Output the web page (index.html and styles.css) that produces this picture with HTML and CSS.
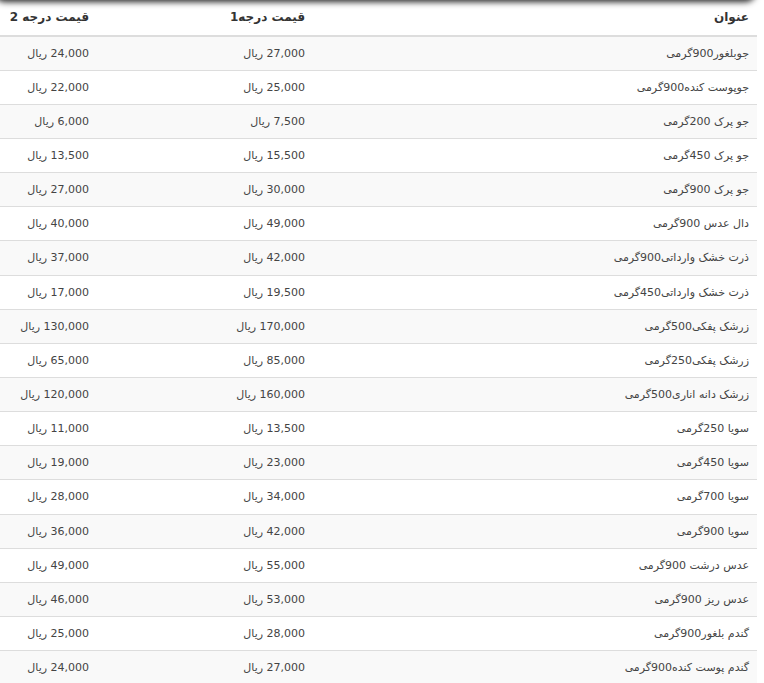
FILE: index.html
```html
<!DOCTYPE html>
<html lang="fa" dir="rtl">
<head>
<meta charset="utf-8">
<link rel="stylesheet" href="styles.css">
</head>
<body>
<div class="topbar"></div>
<table class="prices">
<thead>
<tr><th class="c-title">عنوان</th><th class="c-p1">قیمت درجه1</th><th class="c-p2">قیمت درجه 2</th></tr>
</thead>
<tbody>
<tr><td>جوبلغور900گرمی</td><td>27,000 ریال</td><td>24,000 ریال</td></tr>
<tr><td>جوپوست کنده900گرمی</td><td>25,000 ریال</td><td>22,000 ریال</td></tr>
<tr><td>جو پرک 200گرمی</td><td>7,500 ریال</td><td>6,000 ریال</td></tr>
<tr><td>جو پرک 450گرمی</td><td>15,500 ریال</td><td>13,500 ریال</td></tr>
<tr><td>جو پرک 900گرمی</td><td>30,000 ریال</td><td>27,000 ریال</td></tr>
<tr><td>دال عدس 900گرمی</td><td>49,000 ریال</td><td>40,000 ریال</td></tr>
<tr><td>ذرت خشک وارداتی900گرمی</td><td>42,000 ریال</td><td>37,000 ریال</td></tr>
<tr><td>ذرت خشک وارداتی450گرمی</td><td>19,500 ریال</td><td>17,000 ریال</td></tr>
<tr><td>زرشک پفکی500گرمی</td><td>170,000 ریال</td><td>130,000 ریال</td></tr>
<tr><td>زرشک پفکی250گرمی</td><td>85,000 ریال</td><td>65,000 ریال</td></tr>
<tr><td>زرشک دانه اناری500گرمی</td><td>160,000 ریال</td><td>120,000 ریال</td></tr>
<tr><td>سویا 250گرمی</td><td>13,500 ریال</td><td>11,000 ریال</td></tr>
<tr><td>سویا 450گرمی</td><td>23,000 ریال</td><td>19,000 ریال</td></tr>
<tr><td>سویا 700گرمی</td><td>34,000 ریال</td><td>28,000 ریال</td></tr>
<tr><td>سویا 900گرمی</td><td>42,000 ریال</td><td>36,000 ریال</td></tr>
<tr><td>عدس درشت 900گرمی</td><td>55,000 ریال</td><td>49,000 ریال</td></tr>
<tr><td>عدس ریز 900گرمی</td><td>53,000 ریال</td><td>46,000 ریال</td></tr>
<tr><td>گندم بلغور900گرمی</td><td>28,000 ریال</td><td>25,000 ریال</td></tr>
<tr><td>گندم پوست کنده900گرمی</td><td>27,000 ریال</td><td>24,000 ریال</td></tr>
</tbody>
</table>
</body>
</html>
```
FILE: styles.css
```css
html, body {
  margin: 0;
  padding: 0;
  background: #fff;
}
body {
  font-family: Tahoma, "DejaVu Sans", sans-serif;
  font-size: 11px;
  color: #444;
  direction: rtl;
  position: relative;
  overflow: hidden;
}
.topbar {
  position: absolute;
  top: -20px;
  right: 9px;
  width: 760px;
  height: 20px;
  border-radius: 0 0 10px 10px;
  background: #555;
  box-shadow: 0 1px 6px 1px rgba(0, 0, 0, 0.85);
  z-index: 2;
}
.prices {
  width: 757px;
  margin-left: auto;
  margin-right: 7px;
  border-collapse: collapse;
  border-spacing: 0;
  table-layout: fixed;
}
.prices th,
.prices td {
  padding: 8px;
  line-height: 17.14px;
  text-align: right;
  white-space: nowrap;
}
.prices th {
  font-size: 12px;
  line-height: 18.6px;
  font-weight: bold;
  color: #333;
  border-bottom: 2px solid #ddd;
}
.prices td {
  border-top: 1px solid #ddd;
}
.prices tbody tr:first-child td {
  border-top: 0;
}
.prices tbody tr:nth-child(odd) td {
  background: #f9f9f9;
}
.c-title { width: 428px; }
.c-p1 { width: 200px; }
.c-p2 { width: 81px; }
```
